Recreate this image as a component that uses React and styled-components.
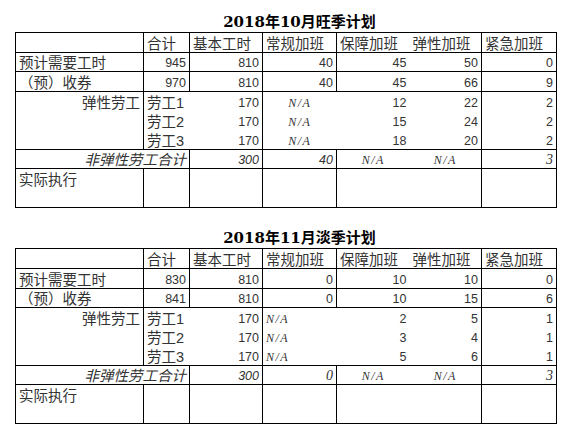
import styled, { createGlobalStyle, css } from "styled-components";

/* ───────── GLOBAL ───────── */

const GlobalStyle = createGlobalStyle`
  html, body {
    margin: 0;
    padding: 0;
    background: #fff;
  }
`;

/* ───────── LAYOUT ───────── */

const Page = styled.div`
  display: flex;
  flex-direction: column;
  gap: 21px;
  padding: 13px 0 0 15px;
`;

const Sheet = styled.table`
  border-collapse: collapse;
  table-layout: fixed;
  width: 541px;
  font-family: "Liberation Sans", "Noto Sans CJK SC", sans-serif;
  font-size: 14.5px;
  color: #333;
`;

const Row = styled.tr`
  height: ${(p) => p.$h || 19.4}px;
`;

const Cell = styled.td`
  border: 1px solid #000;
  padding: 0 3px 1px;
  line-height: 14px;
  white-space: nowrap;
  overflow: hidden;
  text-align: ${(p) => p.$align || "left"};
  vertical-align: ${(p) => p.$valign || "bottom"};
  ${(p) => p.$valign === "top" && css`padding-top: 4px;`}
  ${(p) => p.$noL && css`border-left: none;`}
  ${(p) => p.$noR && css`border-right: none;`}
  ${(p) => p.$noT && css`border-top: none;`}
  ${(p) => p.$noB && css`border-bottom: none;`}
  ${(p) => p.$num && css`font-size: 12.5px;`}
  ${(p) => p.$italic && css`font-style: italic;`}
  ${(p) => p.$serif && css`font-family: "Liberation Serif", serif; font-size: 14px;`}
`;

const Blank = styled.td`
  border: none;
  padding: 0;
`;

const TitleCell = styled.td`
  border: none;
  padding: 0 0 3px;
  line-height: 14px;
  text-align: center;
  vertical-align: bottom;
  font-family: "DejaVu Serif", "Noto Sans CJK SC", serif;
  font-weight: bold;
  font-size: 15px;
  color: #000;
  white-space: nowrap;
`;

const NA = styled.span`
  font-family: "Liberation Serif", serif;
  font-style: italic;
  font-size: 12px;
  letter-spacing: 1.5px;
  color: #333;
`;

/* ───────── DATA ───────── */

const HEADS = ["合计", "基本工时", "常规加班", "保障加班", "弹性加班", "紧急加班"];
const COLS = [128, 46, 73, 74, 73, 72, 75];

const PLANS = [
  {
    title: "2018年10月旺季计划",
    need: [945, 810, 40, 45, 50, 0],
    coupon: [970, 810, 40, 45, 66, 9],
    workers: [
      [170, 12, 22, 2],
      [170, 15, 24, 2],
      [170, 18, 20, 2],
    ],
    naAlign: "center",
    total: { base: "300", regular: "40", regularSerif: false, urgent: "3" },
  },
  {
    title: "2018年11月淡季计划",
    need: [830, 810, 0, 10, 10, 0],
    coupon: [841, 810, 0, 10, 15, 6],
    workers: [
      [170, 2, 5, 1],
      [170, 3, 4, 1],
      [170, 5, 6, 1],
    ],
    naAlign: "left",
    total: { base: "300", regular: "0", regularSerif: true, urgent: "3" },
  },
];

/* ───────── ROWS ───────── */

function NumberRow({ label, values }) {
  return (
    <Row>
      <Cell>{label}</Cell>
      {values.map((v, i) => (
        <Cell key={i} $num $align="right" $noR={i === 3} $noL={i === 4}>
          {v}
        </Cell>
      ))}
    </Row>
  );
}

function WorkerRow({ index, values, naAlign }) {
  const first = index === 0;
  const last = index === 2;
  const edge = { $noT: !first, $noB: !last };
  const [base, guard, flex, urgent] = values;
  return (
    <Row>
      <Cell {...edge} $align="right">{first ? "弹性劳工" : ""}</Cell>
      <Cell {...edge} $noR>劳工{index + 1}</Cell>
      <Cell {...edge} $noL $num $align="right">{base}</Cell>
      <Cell {...edge} $noR $align={naAlign}><NA>N/A</NA></Cell>
      <Cell {...edge} $noL $noR $num $align="right">{guard}</Cell>
      <Cell {...edge} $noL $num $align="right">{flex}</Cell>
      <Cell {...edge} $num $align="right">{urgent}</Cell>
    </Row>
  );
}

function Plan({ plan }) {
  const { total } = plan;
  return (
    <Sheet>
      <colgroup>
        {COLS.map((w, i) => (
          <col key={i} style={{ width: w }} />
        ))}
      </colgroup>
      <tbody>
        <Row>
          <Blank />
          <Blank />
          <TitleCell colSpan={3}>{plan.title}</TitleCell>
          <Blank />
          <Blank />
        </Row>
        <Row $h={20}>
          <Cell />
          {HEADS.map((h, i) => (
            <Cell key={h} $noR={i === 3} $noL={i === 4}>{h}</Cell>
          ))}
        </Row>
        <NumberRow label="预计需要工时" values={plan.need} />
        <NumberRow label="（预）收券" values={plan.coupon} />
        {plan.workers.map((w, i) => (
          <WorkerRow key={i} index={i} values={w} naAlign={plan.naAlign} />
        ))}
        <Row>
          <Cell colSpan={2} $italic $align="right">非弹性劳工合计</Cell>
          <Cell $italic $num $align="right">{total.base}</Cell>
          <Cell $italic $num={!total.regularSerif} $serif={total.regularSerif} $align="right">
            {total.regular}
          </Cell>
          <Cell $noR $align="center"><NA>N/A</NA></Cell>
          <Cell $noL $align="center"><NA>N/A</NA></Cell>
          <Cell $italic $serif $align="right">{total.urgent}</Cell>
        </Row>
        <Row $h={39}>
          <Cell $valign="top">实际执行</Cell>
          <Cell />
          <Cell />
          <Cell />
          <Cell $noR />
          <Cell $noL />
          <Cell />
        </Row>
      </tbody>
    </Sheet>
  );
}

export default function App() {
  return (
    <>
      <GlobalStyle />
      <Page>
        {PLANS.map((p) => (
          <Plan key={p.title} plan={p} />
        ))}
      </Page>
    </>
  );
}
